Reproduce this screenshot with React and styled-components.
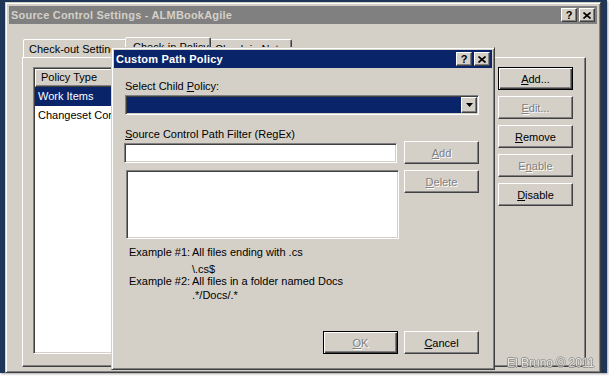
import React from 'react';
import styled, { createGlobalStyle, css } from 'styled-components';

const GlobalStyle = createGlobalStyle`
  * { box-sizing: border-box; }
  body {
    margin: 0;
    background: #fff;
    font-family: "Liberation Sans", Arial, sans-serif;
    font-size: 11px;
    color: #000;
  }
`;

const raised = css`
  border: 1px solid;
  border-color: #fff #404040 #404040 #fff;
  box-shadow: inset -1px -1px #808080;
`;

const sunken = css`
  border: 1px solid;
  border-color: #808080 #fff #fff #808080;
  box-shadow: inset 1px 1px #404040, inset -1px -1px #d4d0c8;
  padding: 1px;
`;

const Desktop = styled.div`
  position: relative;
  width: 609px;
  height: 377px;
  overflow: hidden;
  background: #fff;
`;

const Screen = styled.div`
  width: 607px;
  height: 373px;
  padding: 2px 6px 0 5px;
  background: #203658;
  box-shadow: 1px 1px 2px rgba(0, 0, 0, 0.35);
`;

const Frame = styled.div`
  display: flex;
  flex-direction: column;
  background: #d4d0c8;
  border: 1px solid;
  border-color: #d4d0c8 #404040 #404040 #d4d0c8;
  box-shadow: inset 1px 1px #fff, inset -1px -1px #808080;
  padding: ${(p) => p.$pad}px;
`;

const MainWindow = styled(Frame)`
  height: 371px;
`;

const Dialog = styled(Frame)`
  position: absolute;
  z-index: 10;
  left: 111px;
  top: 47px;
  width: 384px;
  height: 323px;
`;

const TitleBar = styled.div`
  display: flex;
  align-items: center;
  height: 18px;
  flex-shrink: 0;
  padding: 0 2px;
  background: ${(p) => (p.$active ? '#0a246a' : '#808080')};
  color: ${(p) => (p.$active ? '#fff' : '#d4d0c8')};
  font-weight: bold;
  font-size: 11px;
  letter-spacing: 0.2px;
`;

const TitleText = styled.span`
  flex: 1;
  white-space: nowrap;
`;

const CaptionButton = styled.div`
  ${raised};
  display: flex;
  align-items: center;
  justify-content: center;
  width: 16px;
  height: 14px;
  margin-left: 2px;
  background: #d4d0c8;
  color: #000;
  font-weight: bold;
  font-size: 11px;
  line-height: 12px;
  letter-spacing: 0;
`;

const WindowBody = styled.div`
  flex: 1;
  display: flex;
  flex-direction: column;
  padding: 13px 11px 2px 13px;
`;

const TabStrip = styled.div`
  position: relative;
  z-index: 1;
  display: flex;
  align-items: flex-end;
  height: 20px;
  padding-left: 1px;
`;

const Tab = styled.div`
  position: relative;
  z-index: ${(p) => (p.$selected ? 2 : 1)};
  width: ${(p) => p.$width}px;
  height: ${(p) => (p.$selected ? 21 : 18)}px;
  margin: ${(p) => (p.$selected ? '0 -2px -1px -2px' : '0')};
  padding: ${(p) => (p.$selected ? '3px 0 0 7px' : '3px 0 0 5px')};
  background: #d4d0c8;
  border: 1px solid;
  border-bottom: none;
  border-color: #fff #404040 transparent #fff;
  border-radius: 2px 2px 0 0;
  box-shadow: inset -1px 0 #808080;
  white-space: nowrap;
  overflow: hidden;
  line-height: 13px;
`;

const TabPanel = styled.div`
  flex: 1;
  display: flex;
  gap: 12px;
  padding: 9px 12px 12px 10px;
  ${raised};
`;

const ListView = styled.div`
  ${sunken};
  flex: 1;
  display: flex;
  flex-direction: column;
  background: #fff;
`;

const ListHeader = styled.div`
  display: flex;
  height: 18px;
`;

const HeaderCell = styled.div`
  ${raised};
  width: ${(p) => (p.$width ? `${p.$width}px` : 'auto')};
  flex: ${(p) => (p.$width ? 'none' : 1)};
  background: #d4d0c8;
  padding-left: 5px;
  line-height: 15px;
`;

const ListRow = styled.div`
  height: 19px;
  line-height: 19px;
  padding-left: 3px;
  white-space: nowrap;
  background: ${(p) => (p.$selected ? '#0a246a' : 'transparent')};
  color: ${(p) => (p.$selected ? '#fff' : '#000')};
`;

const ButtonColumn = styled.div`
  display: flex;
  flex-direction: column;
  gap: 6px;
  width: 75px;
`;

const Button = styled.button`
  width: 75px;
  height: 23px;
  padding: 0;
  background: #d4d0c8;
  font-family: "Liberation Sans", Arial, sans-serif;
  font-size: 11px;
  color: #000;
  border: 1px solid;
  border-color: #fff #404040 #404040 #fff;
  box-shadow: inset -1px -1px #808080;
  ${(p) =>
    p.$default &&
    css`
      border-color: #000;
      box-shadow: inset 1px 1px #fff, inset -1px -1px #404040,
        inset -2px -2px #808080;
    `}
  &:disabled {
    color: #808080;
    text-shadow: 1px 1px #fff;
  }
`;

const DialogBody = styled.div`
  flex: 1;
  display: flex;
  flex-direction: column;
  padding: 12px 13px 13px 11px;
`;

const FieldLabel = styled.div`
  height: 13px;
  line-height: 13px;
  margin-top: ${(p) => p.$top || 0}px;
  white-space: nowrap;
`;

const Combo = styled.div`
  ${sunken};
  display: flex;
  height: 20px;
  margin-top: 2px;
  background: #fff;
`;

const ComboValue = styled.div`
  flex: 1;
  background: #0a246a;
`;

const DropButton = styled.div`
  ${raised};
  display: flex;
  align-items: center;
  justify-content: center;
  width: 16px;
  background: #d4d0c8;
`;

const FieldRow = styled.div`
  display: flex;
  justify-content: space-between;
  align-items: flex-start;
  margin-top: ${(p) => p.$top || 0}px;
`;

const TextBox = styled.div`
  ${sunken};
  width: 273px;
  height: ${(p) => p.$height}px;
  margin: ${(p) => p.$margin};
  background: #fff;
`;

const Examples = styled.div`
  display: grid;
  grid-template-columns: 63px 1fr;
  grid-template-rows: 17px 12px 14px 13px;
  margin-top: 7px;
  padding-left: 4px;
  line-height: 13px;
  white-space: nowrap;
`;

const Footer = styled.div`
  display: flex;
  justify-content: flex-end;
  gap: 6px;
  margin-top: auto;
`;

const Watermark = styled.div`
  position: absolute;
  z-index: 20;
  left: 507px;
  top: 356px;
  font-size: 12px;
  line-height: 14px;
  color: #ecebe6;
  text-shadow: 1px 0 #8a8a8a, -1px 0 #8a8a8a, 0 1px #8a8a8a, 0 -1px #8a8a8a;
  opacity: 0.8;
  white-space: nowrap;
`;

const CloseGlyph = () => (
  <svg width="8" height="7" viewBox="0 0 8 7">
    <path d="M0.5 0.5 L7.5 6.5 M7.5 0.5 L0.5 6.5" stroke="#000" strokeWidth="1.6" />
  </svg>
);

const DownArrow = () => (
  <svg width="7" height="4" viewBox="0 0 7 4">
    <path d="M0 0 H7 L3.5 4 Z" fill="#000" />
  </svg>
);

const Caption = ({ title, active }) => (
  <TitleBar $active={active}>
    <TitleText>{title}</TitleText>
    <CaptionButton>?</CaptionButton>
    <CaptionButton>
      <CloseGlyph />
    </CaptionButton>
  </TitleBar>
);

const App = () => (
  <Desktop>
    <GlobalStyle />
    <Screen>
      <MainWindow $pad={3}>
        <Caption title="Source Control Settings - ALMBookAgile" />
        <WindowBody>
          <TabStrip>
            <Tab $width={104}>Check-out Settings</Tab>
            <Tab $width={86} $selected>
              Check-in Policy
            </Tab>
            <Tab $width={83}>Check-in Notes</Tab>
          </TabStrip>
          <TabPanel>
            <ListView>
              <ListHeader>
                <HeaderCell $width={150}>Policy Type</HeaderCell>
                <HeaderCell />
              </ListHeader>
              <ListRow $selected>Work Items</ListRow>
              <ListRow>Changeset Comments Policy</ListRow>
            </ListView>
            <ButtonColumn>
              <Button $default>
                <u>A</u>dd...
              </Button>
              <Button disabled>
                <u>E</u>dit...
              </Button>
              <Button>
                <u>R</u>emove
              </Button>
              <Button disabled>
                E<u>n</u>able
              </Button>
              <Button>
                <u>D</u>isable
              </Button>
            </ButtonColumn>
          </TabPanel>
        </WindowBody>
      </MainWindow>
    </Screen>

    <Dialog $pad={2}>
      <Caption title="Custom Path Policy" active />
      <DialogBody>
        <FieldLabel>
          Select Child <u>P</u>olicy:
        </FieldLabel>
        <Combo>
          <ComboValue />
          <DropButton>
            <DownArrow />
          </DropButton>
        </Combo>
        <FieldLabel $top={13}>
          <u>S</u>ource Control Path Filter (RegEx)
        </FieldLabel>
        <FieldRow>
          <TextBox $height={20} $margin="2px 0 0 -1px" />
          <Button disabled>
            <u>A</u>dd
          </Button>
        </FieldRow>
        <FieldRow $top={6}>
          <TextBox $height={69} $margin="0 0 0 1px" />
          <Button disabled>
            <u>D</u>elete
          </Button>
        </FieldRow>
        <Examples>
          <span>Example #1:</span>
          <span>All files ending with .cs</span>
          <span />
          <span>\.cs$</span>
          <span>Example #2:</span>
          <span>All files in a folder named Docs</span>
          <span />
          <span>.*/Docs/.*</span>
        </Examples>
        <Footer>
          <Button $default disabled>
            <u>O</u>K
          </Button>
          <Button>
            <u>C</u>ancel
          </Button>
        </Footer>
      </DialogBody>
    </Dialog>

    <Watermark>El Bruno © 2011</Watermark>
  </Desktop>
);

export default App;
